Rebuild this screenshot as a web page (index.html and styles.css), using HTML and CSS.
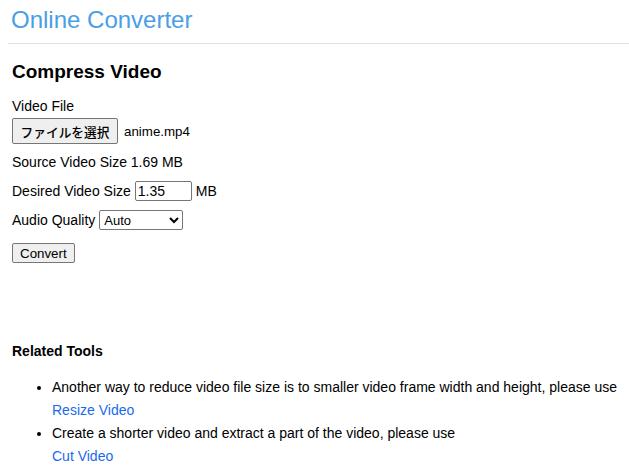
FILE: index.html
```html
<!DOCTYPE html>
<html lang="en">
<head>
<meta charset="utf-8">
<title>Online Converter</title>
<link rel="stylesheet" href="styles.css">
</head>
<body>
<header class="site-header">
  <a class="brand" href="#">Online Converter</a>
</header>
<main class="content">
  <h1 class="page-title">Compress Video</h1>
  <form class="form">
    <div class="label">Video File</div>
    <div class="file-row">
      <button type="button" class="btn file-btn">ファイルを選択</button>
      <span class="file-name">anime.mp4</span>
    </div>
    <div class="row source">Source Video Size 1.69 MB</div>
    <div class="row desired">
      <span>Desired Video Size</span>
      <input class="size-input" type="text" value="1.35">
      <span>MB</span>
    </div>
    <div class="row audio">
      <span>Audio Quality</span>
      <select class="audio-select"><option>Auto</option></select>
    </div>
    <div class="row submit">
      <button type="button" class="btn convert">Convert</button>
    </div>
  </form>
  <section class="related">
    <h2 class="related-title">Related Tools</h2>
    <ul class="related-list">
      <li>Another way to reduce video file size is to smaller video frame width and height, please use<br><a href="#">Resize Video</a></li>
      <li>Create a shorter video and extract a part of the video, please use<br><a href="#">Cut Video</a></li>
    </ul>
  </section>
</main>
</body>
</html>
```
FILE: styles.css
```css
html, body {
  margin: 0;
  padding: 0;
  background: #fff;
}
body {
  font-family: "Liberation Sans", Arial, "Noto Sans CJK JP", sans-serif;
  font-size: 14px;
  color: #000;
  padding-left: 8px;
}
.site-header {
  height: 43px;
  border-bottom: 1px solid #e0e0e0;
  display: flex;
  align-items: center;
  padding-left: 3px;
}
.brand {
  color: #4a9ee6;
  font-size: 24px;
  text-decoration: none;
  margin-top: -3px;
}
.content {
  padding-left: 4px;
}
.page-title {
  font-size: 19px;
  font-weight: bold;
  margin: 17px 0 0 0;
  line-height: 22px;
}
.form {
  margin-top: 15px;
}
.label {
  line-height: 16px;
}
.file-row {
  display: flex;
  align-items: center;
  gap: 6px;
  margin-top: 4px;
}
.btn {
  font-family: "Liberation Sans", Arial, "Noto Sans CJK JP", sans-serif;
  background: #efefef;
  border: 1px solid #767676;
  border-radius: 2px;
  color: #000;
  padding: 0 6px;
  margin: 0;
}
.file-btn {
  height: 26px;
  width: 106px;
  font-size: 12.7px;
  font-weight: 500;
  padding: 0;
  font-family: "Noto Sans CJK JP", sans-serif;
}
.file-name {
  font-size: 13.33px;
}
.row {
  display: flex;
  align-items: center;
  gap: 4px;
}
.source {
  margin-top: 10px;
  line-height: 16px;
}
.desired {
  margin-top: 11px;
}
.size-input {
  width: 51px;
  height: 16px;
  padding: 1px 2px;
  border: 1px solid #767676;
  border-radius: 2px;
  font-family: "Liberation Sans", Arial, sans-serif;
  font-size: 14px;
  margin: 0;
}
.audio {
  margin-top: 9px;
}
.audio-select {
  width: 84px;
  height: 20px;
  font-family: "Liberation Sans", Arial, sans-serif;
  font-size: 13px;
  border: 1px solid #767676;
  border-radius: 2px;
  background: #fff;
  margin: 0;
}
.submit {
  margin-top: 13px;
}
.convert {
  height: 20px;
  font-size: 13.33px;
  padding: 0 7px;
}
.related {
  margin-top: 80px;
}
.related-title {
  font-size: 14px;
  font-weight: bold;
  margin: 0;
  line-height: 16px;
}
.related-list {
  margin: 17px 0 0 0;
  padding-left: 40px;
  line-height: 23px;
}
.related-list a {
  color: #1a6aee;
  text-decoration: none;
}
```
